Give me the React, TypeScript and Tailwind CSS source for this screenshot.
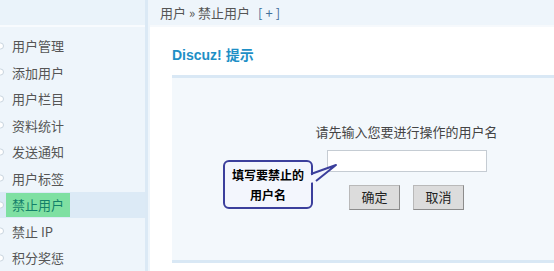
import React from "react";

const menu = [
  "用户管理",
  "添加用户",
  "用户栏目",
  "资料统计",
  "发送通知",
  "用户标签",
  "禁止用户",
  "禁止 IP",
  "积分奖惩",
];

const cjk = "font-['Microsoft_YaHei','Noto_Sans_CJK_SC',sans-serif]";

function Sidebar() {
  return (
    <aside className="flex w-[148px] shrink-0 flex-col bg-[#eef5fb] border-r-[3px] border-[#dbe9f5]">
      <div className="h-[27px] overflow-hidden border-b-2 border-[#f8fbfe] bg-[#eaf3fa]">
        <p className="-mt-[13px] whitespace-nowrap pl-[28px] text-[12px] font-bold tracking-[2px] text-[#d2dde6] font-['Liberation_Sans',sans-serif]">
          CONTROL PANEL
        </p>
      </div>
      <ul className="flex flex-col pt-[6px]">
        {menu.map((item) => {
          const active = item === "禁止用户";
          return (
            <li
              key={item}
              className={`relative flex h-[26.5px] items-center ${active ? "bg-[#dceaf6]" : ""}`}
            >
              <span className="absolute -left-[3px] top-1/2 h-[7px] w-[7px] -translate-y-1/2 rounded-full border border-[#c9d5df] bg-white" />
              <span
                className={`ml-[6px] flex h-[24px] items-center px-[6px] text-[13px] ${cjk} ${
                  active ? "bg-[#7fe0a2] text-[#13806a]" : "text-[#555]"
                }`}
              >
                {item}
              </span>
            </li>
          );
        })}
      </ul>
    </aside>
  );
}

function Callout() {
  return (
    <div className="absolute left-[51px] top-[82px]">
      <div
        className={`flex h-[49px] w-[90px] flex-col items-center justify-center rounded-[6px] border-2 border-[#3b3f9c] bg-[#f3f6fd] text-[12px] font-bold leading-[20px] text-black ${cjk}`}
      >
        <span>填写要禁止的</span>
        <span>用户名</span>
      </div>
      <svg
        className="absolute left-[86px] top-[2px]"
        width="32"
        height="26"
        viewBox="0 0 32 26"
      >
        <path d="M0 14 L6 12 L27 3 L7 20 L0 21 Z" fill="#f3f6fd" />
        <path d="M2 12 L27 3 L7 19" fill="none" stroke="#3b3f9c" strokeWidth="2" strokeLinejoin="round" />
      </svg>
    </div>
  );
}

function Notice() {
  return (
    <section className="px-[22px] pt-[18px]">
      <h2 className="text-[14px] font-bold text-[#1e8fc6] font-['Liberation_Sans','Noto_Sans_CJK_SC',sans-serif]">
        Discuz! 提示
      </h2>
      <div className="relative mt-[9px] -mr-[22px] h-[188px] border-t-[3px] border-b-[3px] border-[#d9e8f5] bg-[#f3f8fc]">
        <div className={`flex flex-col items-center pl-[87px] pt-[44px] text-[13px] ${cjk}`}>
          <p className="text-[#444]">请先输入您要进行操作的用户名</p>
          <input
            type="text"
            className="mt-[8px] h-[22px] w-[160px] border border-[#c5ccd3] bg-white outline-none"
          />
          <div className="mt-[13px] flex gap-[13px]">
            <button className="h-[25px] w-[51px] border border-[#b9b9b9] border-r-[#8c8c8c] border-b-[#8c8c8c] bg-[#dcdcdc] text-[13px] text-[#222]">
              确定
            </button>
            <button className="h-[25px] w-[51px] border border-[#b9b9b9] border-r-[#8c8c8c] border-b-[#8c8c8c] bg-[#dcdcdc] text-[13px] text-[#222]">
              取消
            </button>
          </div>
        </div>
        <Callout />
      </div>
    </section>
  );
}

export default function App() {
  return (
    <div className="flex h-[271px] w-[554px] overflow-hidden bg-white">
      <Sidebar />
      <main className="flex min-w-0 flex-1 flex-col border-l-2 border-[#eef5fb]">
        <div
          className={`flex h-[27px] items-center border-b-2 border-[#f6f9fc] bg-[#eef5fb] pl-[10px] text-[13px] text-[#555] ${cjk}`}
        >
          用户 » 禁止用户
          <span className="ml-[8px] tracking-[3px] text-[#3f6f9a]">[+]</span>
        </div>
        <Notice />
      </main>
    </div>
  );
}
